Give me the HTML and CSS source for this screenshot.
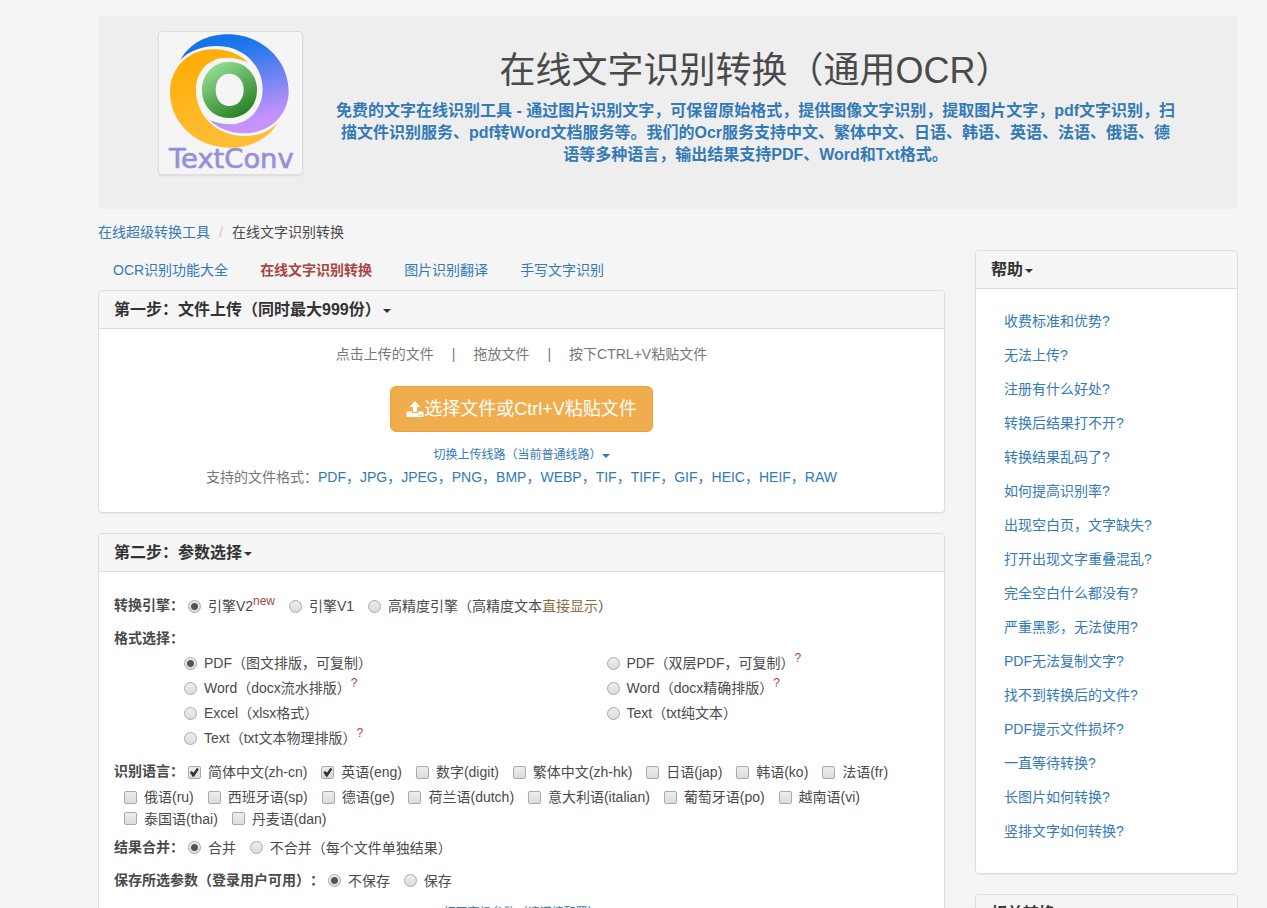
FILE: index.html
```html
<!DOCTYPE html>
<html lang="zh-CN">
<head>
<meta charset="utf-8">
<title>在线文字识别转换</title>
<link rel="stylesheet" href="styles.css">
</head>
<body>
<div class="page">
  <header class="hero">
    <svg class="logo" viewBox="0 0 429 426" role="img" aria-label="TextConv">
      <defs>
        <linearGradient id="blue" x1="0" y1="0" x2="0.3" y2="1"><stop offset="0.1" stop-color="#0f74e8"/><stop offset="0.3" stop-color="#2478ea"/><stop offset="1" stop-color="#c793fb"/></linearGradient>
        <linearGradient id="gold" x1="0" y1="0" x2="0.3" y2="1"><stop offset="0" stop-color="#ffab00"/><stop offset="1" stop-color="#ffbd35"/></linearGradient>
        <linearGradient id="green" x1="0.2" y1="0" x2="0.8" y2="1"><stop offset="0" stop-color="#9be298"/><stop offset="1" stop-color="#207a1c"/></linearGradient>
      </defs>
      <path fill="url(#blue)" d="M64 84C92 34 144 7 207 7C308 7 389 84 389 178C389 251 331 304 257 304C214 304 176 289 152 264C173 273 194 277 213 277C269 277 311 231 311 172C311 101 253 42 176 42C130 42 91 56 64 84Z"/>
      <path fill="url(#gold)" d="M267 91C239 65 204 52 162 52C89 52 33 108 33 180C33 275 115 347 212 347C275 347 327 320 357 272C331 298 298 312 255 312C172 312 111 250 111 174C111 117 150 77 202 77C226 77 247 82 267 91Z"/>
      <path fill="url(#green)" fill-rule="evenodd" d="M211 89C259 89 294 126 294 174C294 223 259 258 211 258C164 258 129 223 129 174C129 126 164 89 211 89ZM211 125C186 125 170 147 170 173C170 201 186 222 211 222C237 222 254 201 254 173C254 147 237 125 211 125Z"/>
      <text class="logo-text" x="217" y="409" text-anchor="middle">TextConv</text>
    </svg>
    <div class="hero-copy">
      <h1>在线文字识别转换（通用OCR）</h1>
      <p>免费的文字在线识别工具 - 通过图片识别文字，可保留原始格式，提供图像文字识别，提取图片文字，pdf文字识别，扫描文件识别服务、pdf转Word文档服务等。我们的Ocr服务支持中文、繁体中文、日语、韩语、英语、法语、俄语、德语等多种语言，输出结果支持PDF、Word和Txt格式。</p>
    </div>
  </header>
  <nav class="breadcrumb"><a href="#">在线超级转换工具</a><span class="slash">/</span><span>在线文字识别转换</span></nav>
  <div class="columns">
    <main>
      <nav class="tabs">
        <a href="#">OCR识别功能大全</a>
        <a href="#" class="active">在线文字识别转换</a>
        <a href="#">图片识别翻译</a>
        <a href="#">手写文字识别</a>
      </nav>
      <section class="panel">
        <h2 class="panel-head">第一步：文件上传（同时最大999份）<span class="caret"></span></h2>
        <div class="panel-body upload">
          <p class="ways"><span>点击上传的文件</span><span class="bar">|</span><span>拖放文件</span><span class="bar">|</span><span>按下CTRL+V粘贴文件</span></p>
          <button type="button" class="choose"><svg viewBox="0 0 18 18" aria-hidden="true"><path fill="currentColor" d="M9 1L14.500 7H11V12H7V7H3.500Z"/><path fill="currentColor" fill-rule="evenodd" d="M1.500 11.500H6V13H12V11.500H16.500Q17.500 11.500 17.500 12.500V16Q17.500 17 16.500 17H1.500Q.5 17 .5 16V12.500Q.5 11.500 1.500 11.500ZM12.300 14.500V15.700H13.500V14.500ZM14.700 14.500V15.700H15.900V14.500Z"/></svg>选择文件或Ctrl+V粘贴文件</button>
          <a href="#" class="route">切换上传线路（当前普通线路）<span class="caret"></span></a>
          <p class="formats">支持的文件格式：<a href="#">PDF，JPG，JPEG，PNG，BMP，WEBP，TIF，TIFF，GIF，HEIC，HEIF，RAW</a></p>
        </div>
      </section>
      <section class="panel">
        <h2 class="panel-head">第二步：参数选择<span class="caret"></span></h2>
        <form class="panel-body options">
          <div class="row">
            <b>转换引擎：</b>
            <label><input type="radio" name="engine" checked><span>引擎V2<sup>new</sup></span></label>
            <label><input type="radio" name="engine"><span>引擎V1</span></label>
            <label><input type="radio" name="engine"><span>高精度引擎（高精度文本<span class="brown">直接显示</span>）</span></label>
          </div>
          <div class="row format-title"><b>格式选择：</b></div>
          <div class="format-grid">
            <label><input type="radio" name="format" checked><span>PDF（图文排版，可复制）</span></label>
            <label><input type="radio" name="format"><span>PDF（双层PDF，可复制）<sup>?</sup></span></label>
            <label><input type="radio" name="format"><span>Word（docx流水排版）<sup>?</sup></span></label>
            <label><input type="radio" name="format"><span>Word（docx精确排版）<sup>?</sup></span></label>
            <label><input type="radio" name="format"><span>Excel（xlsx格式）</span></label>
            <label><input type="radio" name="format"><span>Text（txt纯文本）</span></label>
            <label><input type="radio" name="format"><span>Text（txt文本物理排版）<sup>?</sup></span></label>
          </div>
          <div class="row languages">
            <b>识别语言：</b>
            <label><input type="checkbox" checked><span>简体中文(zh-cn)</span></label>
            <label><input type="checkbox" checked><span>英语(eng)</span></label>
            <label><input type="checkbox"><span>数字(digit)</span></label>
            <label><input type="checkbox"><span>繁体中文(zh-hk)</span></label>
            <label><input type="checkbox"><span>日语(jap)</span></label>
            <label><input type="checkbox"><span>韩语(ko)</span></label>
            <label><input type="checkbox"><span>法语(fr)</span></label>
            <label><input type="checkbox"><span>俄语(ru)</span></label>
            <label><input type="checkbox"><span>西班牙语(sp)</span></label>
            <label><input type="checkbox"><span>德语(ge)</span></label>
            <label><input type="checkbox"><span>荷兰语(dutch)</span></label>
            <label><input type="checkbox"><span>意大利语(italian)</span></label>
            <label><input type="checkbox"><span>葡萄牙语(po)</span></label>
            <label><input type="checkbox"><span>越南语(vi)</span></label>
            <label><input type="checkbox"><span>泰国语(thai)</span></label>
            <label><input type="checkbox"><span>丹麦语(dan)</span></label>
          </div>
          <div class="row">
            <b>结果合并：</b>
            <label><input type="radio" name="merge" checked><span>合并</span></label>
            <label><input type="radio" name="merge"><span>不合并（每个文件单独结果）</span></label>
          </div>
          <div class="row">
            <b>保存所选参数（登录用户可用）：</b>
            <label><input type="radio" name="save" checked><span>不保存</span></label>
            <label><input type="radio" name="save"><span>保存</span></label>
          </div>
          <a href="#" class="advanced">打开高级参数（请谨慎配置）</a>
        </form>
      </section>
    </main>
    <aside>
      <section class="panel">
        <h2 class="panel-head">帮助<span class="caret"></span></h2>
        <ul class="panel-body links">
          <li><a href="#">收费标准和优势?</a></li>
          <li><a href="#">无法上传?</a></li>
          <li><a href="#">注册有什么好处?</a></li>
          <li><a href="#">转换后结果打不开?</a></li>
          <li><a href="#">转换结果乱码了?</a></li>
          <li><a href="#">如何提高识别率?</a></li>
          <li><a href="#">出现空白页，文字缺失?</a></li>
          <li><a href="#">打开出现文字重叠混乱?</a></li>
          <li><a href="#">完全空白什么都没有?</a></li>
          <li><a href="#">严重黑影，无法使用?</a></li>
          <li><a href="#">PDF无法复制文字?</a></li>
          <li><a href="#">找不到转换后的文件?</a></li>
          <li><a href="#">PDF提示文件损坏?</a></li>
          <li><a href="#">一直等待转换?</a></li>
          <li><a href="#">长图片如何转换?</a></li>
          <li><a href="#">竖排文字如何转换?</a></li>
        </ul>
      </section>
      <section class="panel">
        <h2 class="panel-head">相关转换</h2>
      </section>
    </aside>
  </div>
</div>
</body>
</html>
```
FILE: styles.css
```css
* { box-sizing: border-box; }
body {
  margin: 0;
  background: #f5f5f5;
  color: #4a4a4a;
  font: 14px/20px "Liberation Sans", "Noto Sans CJK SC", sans-serif;
  text-spacing-trim: space-all;
}
a { color: #337ab7; text-decoration: none; }
p, h1, h2, ul { margin: 0; padding: 0; }
.page { padding: 16px 29px 0 98px; }

.hero {
  display: flex;
  align-items: flex-start;
  gap: 30px;
  padding: 15px 60px 34px;
  background: #eee;
  border-radius: 3px;
}
.logo {
  flex: none;
  width: 145px;
  height: 144px;
  background: #f5f5f5;
  border: 1px solid #ddd;
  border-radius: 4px;
  box-shadow: 0 1px 2px rgba(0, 0, 0, .08);
}
.logo-text {
  font: 82px "DejaVu Sans", sans-serif;
  fill: #9490dc;
  stroke: #9490dc;
  stroke-width: 2px;
}
.hero-copy { flex: 1; padding-top: 20px; text-align: center; }
.hero-copy h1 { font-size: 36px; font-weight: 400; line-height: 40px; }
.hero-copy p { margin-top: 9px; color: #337ab7; font-size: 16px; font-weight: 700; line-height: 22px; }

.breadcrumb { display: flex; gap: 9px; margin: 13px 0 8px; }
.slash { color: #ccc; }
.columns { display: grid; grid-template-columns: minmax(0, 1fr) 263px; gap: 30px; align-items: start; }

.tabs { display: flex; gap: 2px; }
.tabs a { padding: 10px 15px; }
.tabs .active { color: #a94442; font-weight: 700; }

.panel {
  margin-bottom: 20px;
  background: #fff;
  border: 1px solid #ddd;
  border-radius: 4px;
  box-shadow: 0 1px 1px rgba(0, 0, 0, .05);
}
.panel-head {
  padding: 10px 15px 9px;
  background: #f5f5f5;
  border-bottom: 1px solid #ddd;
  border-radius: 3px 3px 0 0;
  color: #333;
  font-size: 16px;
  line-height: 18px;
}
.caret {
  display: inline-block;
  margin-left: 2px;
  vertical-align: middle;
  border-top: 4px solid;
  border-left: 4px solid transparent;
  border-right: 4px solid transparent;
}
.panel-body { padding: 15px; }

.upload { display: flex; flex-direction: column; align-items: center; padding-bottom: 25px; color: #777; }
.ways { display: flex; gap: 18px; }
.choose {
  display: flex;
  align-items: center;
  margin: 22px 0 13px;
  padding: 10px 15px;
  background: #f0ad4e;
  border: 1px solid #eea236;
  border-radius: 6px;
  color: #fff;
  font: 18px/24px "Liberation Sans", "Noto Sans CJK SC", sans-serif;
}
.choose svg { width: 18px; height: 18px; }
.route { margin-bottom: 2px; font-size: 12px; }
.route .caret { margin-left: 0; }

.options { padding-top: 23px; }
.row { margin-bottom: 8px; }
.row b { display: inline-block; margin-bottom: 5px; }
.row label { display: inline-flex; align-items: center; gap: 7px; vertical-align: middle; }
.row label + label { margin-left: 10px; }
.format-title { margin-bottom: 0; }
.format-grid {
  display: grid;
  grid-template-columns: 1fr 1fr;
  gap: 5px 0;
  margin: 0 -15px 13px;
}
.format-grid label { display: flex; align-items: center; gap: 7px; padding-left: 85px; }
sup { color: #a94442; font-size: 12px; line-height: 0; }
.brown { color: #8a6d3b; }
input { appearance: none; flex: none; width: 13px; height: 13px; margin: 0; border: 1px solid #a9a9a9; background: linear-gradient(#ededed, #dcdcdc); }
input[type="radio"] { border-radius: 50%; }
input[type="radio"]:checked { background: radial-gradient(circle, #555 0 3px, transparent 4px), linear-gradient(#ededed, #dcdcdc); }
input[type="checkbox"] { display: grid; place-items: center; border-radius: 2px; }
input[type="checkbox"]:checked::before {
  content: "";
  width: 9px;
  height: 9px;
  background: #333;
  clip-path: polygon(0 50%, 20% 35%, 40% 55%, 80% 0, 100% 15%, 45% 100%, 30% 100%);
}
.advanced { display: block; text-align: center; font-size: 12px; }

.links { padding-bottom: 25px; list-style: none; }
.links a { display: block; padding: 7px 13px; }
```
